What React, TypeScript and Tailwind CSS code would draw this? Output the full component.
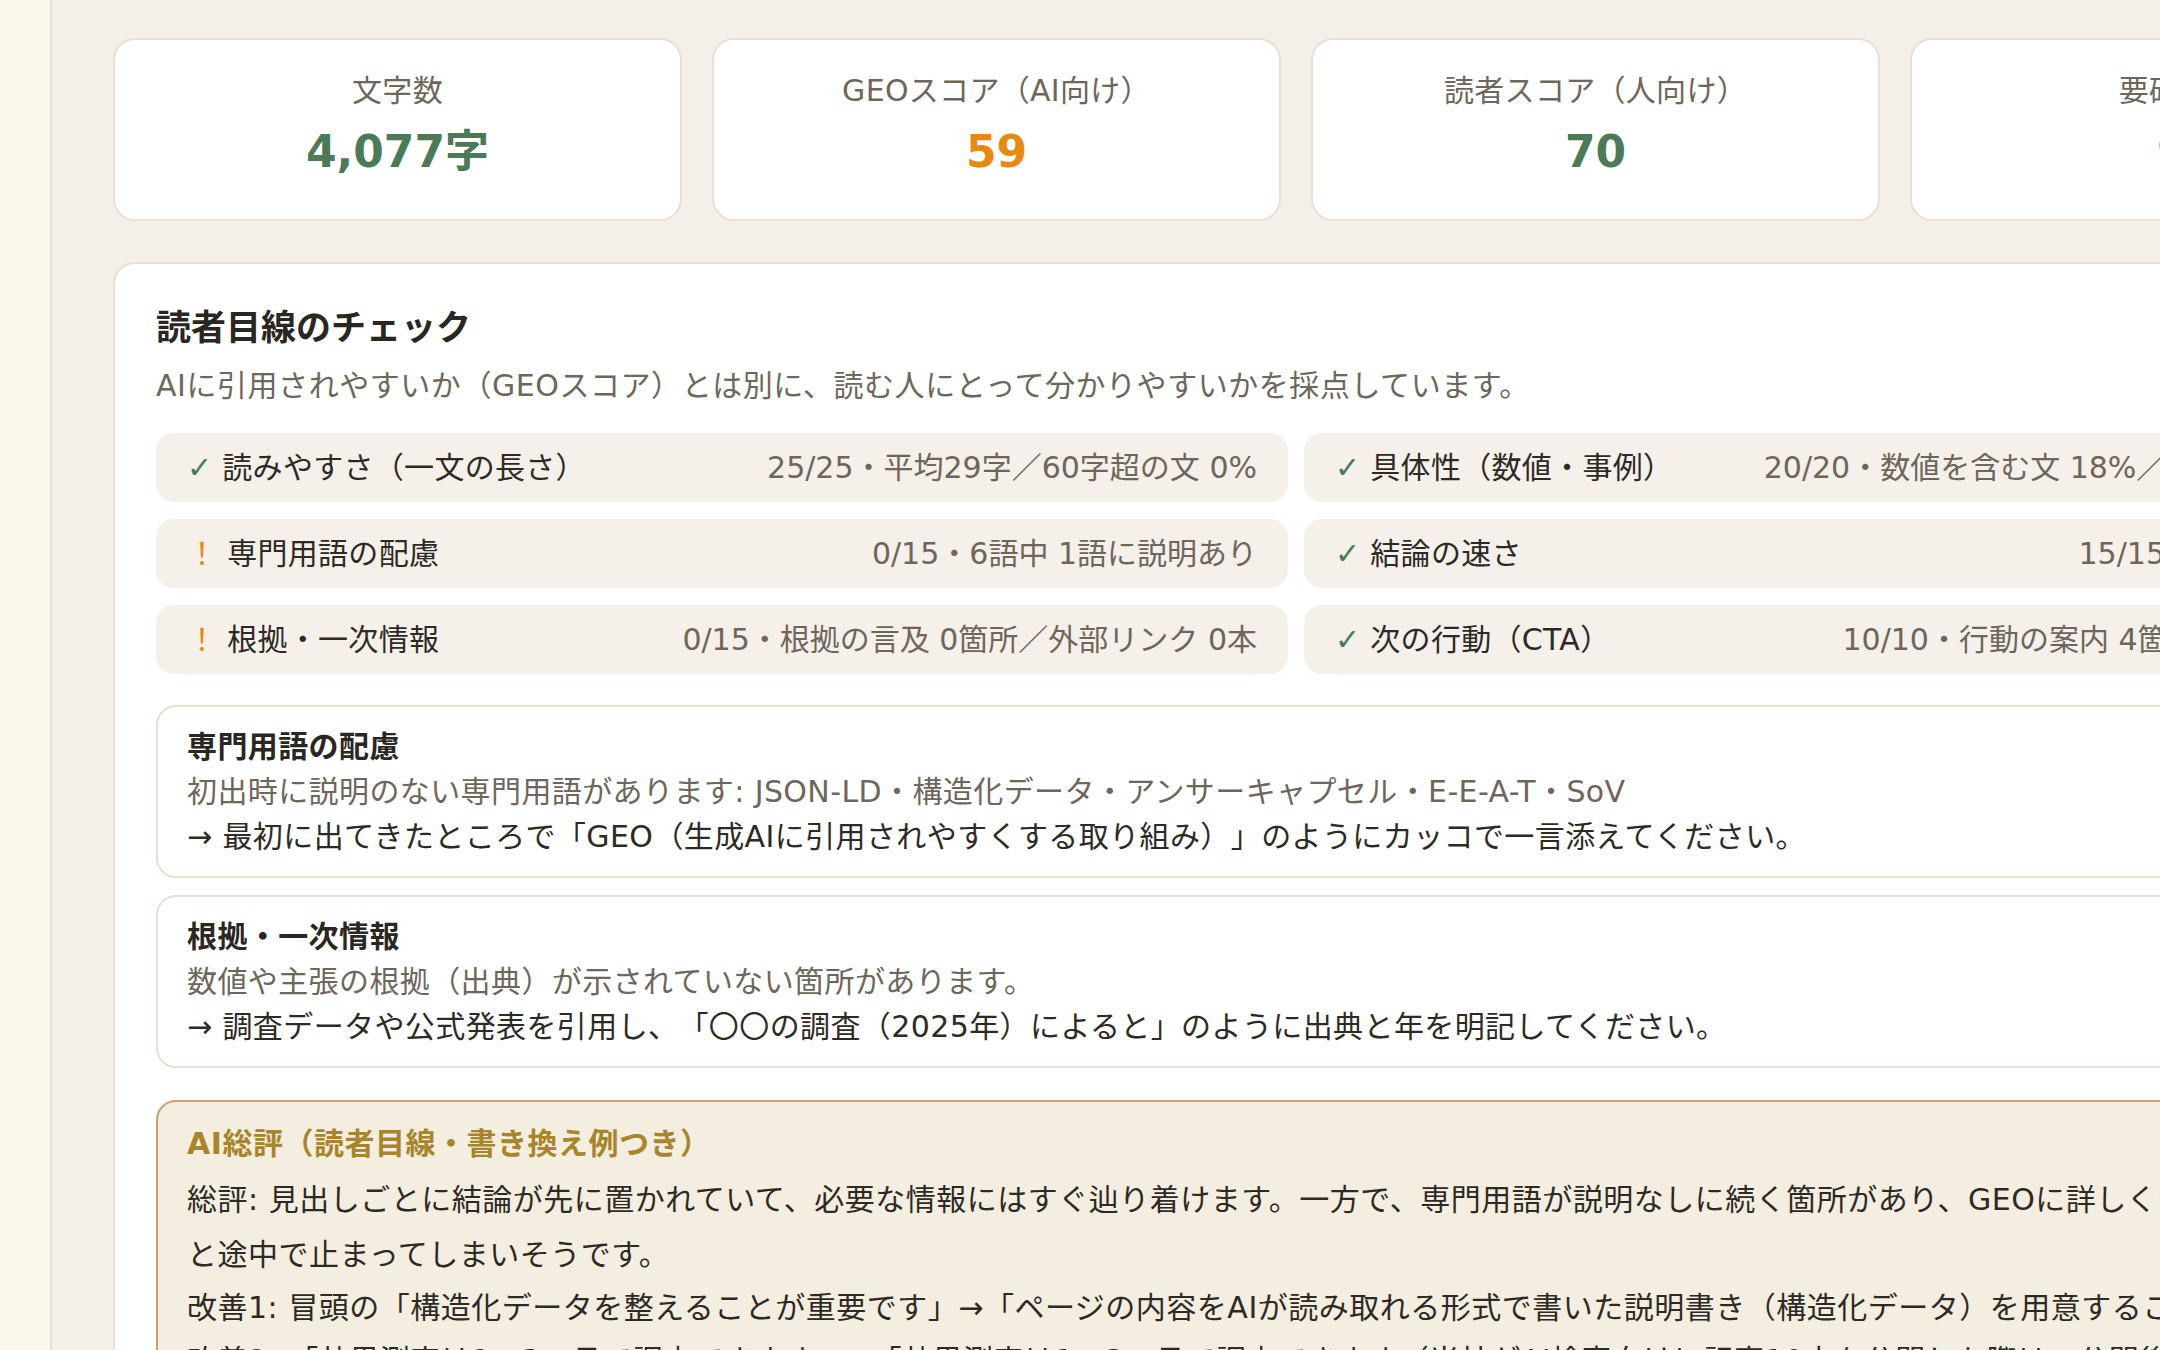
import React from 'react';

type Stat = { label: string; value: string; tone: 'good' | 'warn' };

const STATS: Stat[] = [
  { label: '文字数', value: '4,077字', tone: 'good' },
  { label: 'GEOスコア（AI向け）', value: '59', tone: 'warn' },
  { label: '読者スコア（人向け）', value: '70', tone: 'good' },
  { label: '要確認箇所', value: '9件', tone: 'good' },
];

type Check = { ok: boolean; label: string; detail: string };

const CHECKS: Check[] = [
  { ok: true, label: '読みやすさ（一文の長さ）', detail: '25/25・平均29字／60字超の文 0%' },
  { ok: true, label: '具体性（数値・事例）', detail: '20/20・数値を含む文 18%／事例の言及 3箇所' },
  { ok: false, label: '専門用語の配慮', detail: '0/15・6語中 1語に説明あり' },
  { ok: true, label: '結論の速さ', detail: '15/15・冒頭で結論あり' },
  { ok: false, label: '根拠・一次情報', detail: '0/15・根拠の言及 0箇所／外部リンク 0本' },
  { ok: true, label: '次の行動（CTA）', detail: '10/10・行動の案内 4箇所／末尾CTAあり' },
];

const ISSUES = [
  {
    title: '専門用語の配慮',
    problem: '初出時に説明のない専門用語があります: JSON-LD・構造化データ・アンサーキャプセル・E-E-A-T・SoV',
    fix: '→ 最初に出てきたところで「GEO（生成AIに引用されやすくする取り組み）」のようにカッコで一言添えてください。',
  },
  {
    title: '根拠・一次情報',
    problem: '数値や主張の根拠（出典）が示されていない箇所があります。',
    fix: '→ 調査データや公式発表を引用し、「〇〇の調査（2025年）によると」のように出典と年を明記してください。',
  },
];

function StatCard({ stat }: { stat: Stat }) {
  return (
    <div className="w-[569px] shrink-0 h-[183px] bg-white border-2 border-[#e8e1d1] rounded-[22px] pt-[31px] text-center">
      <div className="text-[30px] leading-[40px] text-[#6e665b] tracking-[0.3px]">{stat.label}</div>
      <div
        className={
          stat.tone === 'warn'
            ? 'mt-[13px] text-[44px] leading-[56px] font-bold text-[#e8890c]'
            : 'mt-[13px] text-[44px] leading-[56px] font-bold text-[#4b7a58]'
        }
      >
        {stat.value}
      </div>
    </div>
  );
}

function CheckRow({ check }: { check: Check }) {
  return (
    <div className="h-[69px] bg-[#f5f0e9] rounded-[18px] px-[31px] flex items-center justify-between whitespace-nowrap overflow-hidden">
      <div className="text-[#2d2a26] tracking-[0.3px]">
        {check.ok ? (
          <span className="text-[#4b7a58]">✓</span>
        ) : (
          <span className="text-[#e8890c]">！</span>
        )}{' '}
        {check.label}
      </div>
      <div className="text-[#6e665b]">{check.detail}</div>
    </div>
  );
}

export default function App() {
  return (
    <div
      className="w-[2160px] h-[1350px] overflow-hidden flex bg-[#f4f0e9] text-[30px] [text-spacing-trim:space-all]"
      style={{ fontFamily: '"DejaVu Sans", "Noto Sans CJK JP", sans-serif' }}
    >
      <aside className="w-[52px] shrink-0 bg-[#faf6ec] border-r-2 border-[#e8e1d1]" />

      <main className="flex-1 min-w-0 pl-[61px] pt-[38px]">
        <div className="w-[2366px]">
          <div className="flex gap-[30px]">
            {STATS.map((s) => (
              <StatCard key={s.label} stat={s} />
            ))}
          </div>

          <section className="mt-[41px] bg-white border-2 border-[#e8e1d1] rounded-[22px] px-[41px] pt-[42px] pb-[40px]">
            <h2 className="text-[35px] leading-[44px] font-bold text-[#2a2622]">読者目線のチェック</h2>
            <p className="mt-[14px] leading-[44px] text-[#6e665b] tracking-[0.55px]">
              AIに引用されやすいか（GEOスコア）とは別に、読む人にとって分かりやすいかを採点しています。
            </p>

            <div className="mt-[25px] grid grid-cols-2 gap-x-[16px] gap-y-[17px]">
              {CHECKS.map((c) => (
                <CheckRow key={c.label} check={c} />
              ))}
            </div>

            <div className="mt-[31px] flex flex-col gap-[17px]">
              {ISSUES.map((issue) => (
                <div
                  key={issue.title}
                  className="border-2 border-[#e8e1d1] rounded-[20px] px-[29px] pt-[17px] pb-[17px] leading-[45px] whitespace-nowrap tracking-[0.4px]"
                >
                  <div className="font-bold text-[#2a2622]">{issue.title}</div>
                  <div className="text-[#6e665b]">{issue.problem}</div>
                  <div className="text-[#2d2a26]">{issue.fix}</div>
                </div>
              ))}
            </div>

            <div className="mt-[32px] bg-[#f3eee0] border-2 border-[#c9a273] rounded-[20px] px-[29px] pt-[20px] pb-[24px] text-[#2d2a26] whitespace-nowrap tracking-[0.5px]">
              <div className="leading-[44px] font-bold text-[#a8842a]">AI総評（読者目線・書き換え例つき）</div>
              <p className="mt-[6px] leading-[55px]">
                総評: 見出しごとに結論が先に置かれていて、必要な情報にはすぐ辿り着けます。一方で、専門用語が説明なしに続く箇所があり、GEOに詳しくない初めての読者だ
                <br />
                と途中で止まってしまいそうです。
              </p>
              <p className="leading-[52px]">
                改善1: 冒頭の「構造化データを整えることが重要です」→「ページの内容をAIが読み取れる形式で書いた説明書き（構造化データ）を用意することが重要です」
              </p>
              <p className="leading-[54px]">
                改善2: 「効果測定は1〜3ヶ月で調査できます」→「効果測定は1〜3ヶ月で調査できます（当社がAI検索向けに記事10本を公開した際は、公開後2〜3ヶ月目に引用率が伸びました）」
              </p>
            </div>
          </section>
        </div>
      </main>
    </div>
  );
}
